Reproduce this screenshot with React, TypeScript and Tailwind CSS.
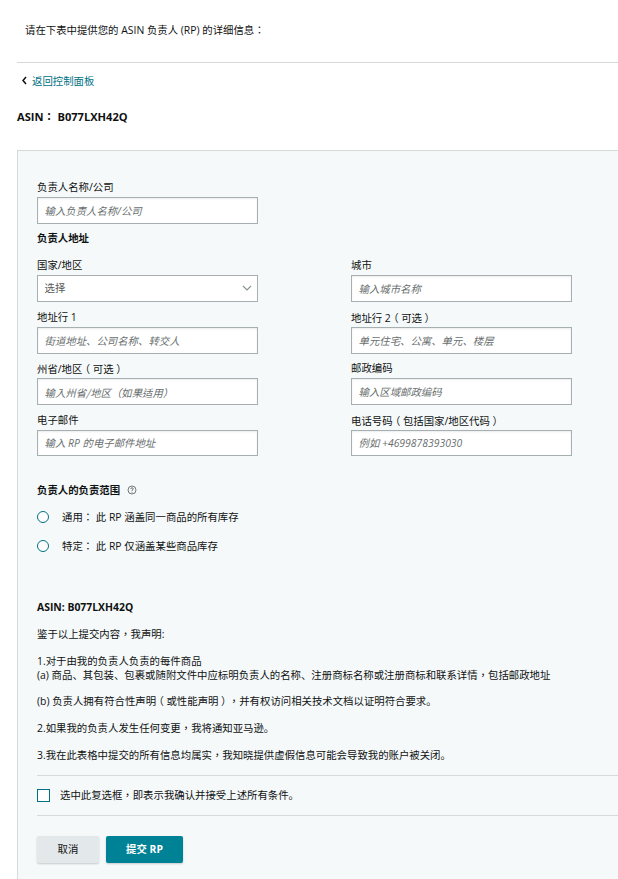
import React from "react";

const FONT = "font-['Open_Sans','Noto_Sans_CJK_SC',sans-serif]";
const TC = "font-['Noto_Sans_CJK_TC',sans-serif]";

function T({ children }: { children: string }) {
  return (
    <>
      {children.split(/([，：（）])/).map((part, i) => {
        if (part === "（" || part === "）") {
          return (
            <span key={i} className={`${TC} mx-[2.6px] [font-feature-settings:'halt']`}>
              {part}
            </span>
          );
        }
        if (part === "，" || part === "：") {
          return (
            <span key={i} className={TC}>
              {part}
            </span>
          );
        }
        return part;
      })}
    </>
  );
}

function Field({
  label,
  placeholder,
  tall = false,
  tc = false,
}: {
  label: string;
  placeholder: string;
  tall?: boolean;
  tc?: boolean;
}) {
  return (
    <div className="flex flex-col">
      <div className="mb-[3px] h-[13px] leading-[13px]">
        <T>{label}</T>
      </div>
      <input
        readOnly
        placeholder={placeholder}
        className={`${tall ? "h-[27.5px]" : "h-[26.67px]"} ${tc ? TC : ""} w-[221px] border border-[#a6b0b3] bg-white pl-[6.5px] pr-[7px] pt-px text-[10.4px] italic text-[#0f1111] outline-none placeholder:text-[#6a6f6f] placeholder:opacity-100 shadow-[inset_0_1px_2px_rgba(15,17,17,0.08)]`}
      />
    </div>
  );
}

function Radio({ text, className = "" }: { text: string; className?: string }) {
  return (
    <div className={`flex items-center ${className}`}>
      <span className="h-[12px] w-[12px] rounded-full border border-[#007185] bg-white" />
      <span className="ml-[13px]">
        <T>{text}</T>
      </span>
    </div>
  );
}

export default function App() {
  return (
    <div className={`${FONT} h-[879px] w-[618px] overflow-hidden bg-white text-[10.4px] leading-[14px] text-[#0f1111] [text-spacing-trim:space-all]`}>
      <div className="h-[62px] pl-[25px] pt-[23px]">
        <T>请在下表中提供您的 ASIN 负责人 (RP) 的详细信息：</T>
      </div>
      <div className="ml-[17px] h-px bg-[#d5d9d9]" />
      <div className="ml-[21px] mt-[11px] flex h-[14px] items-center">
        <svg width="7" height="9" viewBox="0 0 7 9" className="mb-[2px]">
          <path d="M5 1 L2 4.5 L5 8" fill="none" stroke="#0f1111" strokeWidth="1.5" />
        </svg>
        <span className="ml-[4px] text-[#007185]">返回控制面板</span>
      </div>
      <div className="ml-[17px] mt-[21px] h-[14px] text-[11.1px] font-bold">
        <T>ASIN：</T> B077LXH42Q
      </div>
      <div className="ml-[17px] mt-[27px] h-[740px] border-l border-t border-[#d5d9d9] bg-[#f5f9fa] pl-[19px] pt-[30px]">
        <Field label="负责人名称/公司" placeholder="输入负责人名称/公司" />
        <div className="mt-[7px] h-[14px] font-bold">负责人地址</div>
        <div className="mt-[14px] grid w-[535px] grid-cols-[221px_221px] gap-x-[93px] gap-y-[8.7px]">
          <div className="flex flex-col">
            <div className="mb-[3px] h-[13px] leading-[13px]">国家/地区</div>
            <div className="flex h-[27.5px] w-[221px] items-center justify-between border border-[#a6b0b3] bg-white pl-[6.5px] pr-[5px] text-[#565959]">
              <span>选择</span>
              <svg width="10" height="6" viewBox="0 0 10 6">
                <path d="M1 1 L5 5 L9 1" fill="none" stroke="#8a9496" strokeWidth="1.2" />
              </svg>
            </div>
          </div>
          <Field label="城市" placeholder="输入城市名称" tall />
          <Field label="地址行 1" placeholder="街道地址、公司名称、转交人" />
          <Field label="地址行 2（可选）" placeholder="单元住宅、公寓、单元、楼层" />
          <Field label="州省/地区（可选）" placeholder="输入州省/地区（如果适用）" tc />
          <Field label="邮政编码" placeholder="输入区域邮政编码" />
          <Field label="电子邮件" placeholder="输入 RP 的电子邮件地址" />
          <Field label="电话号码（包括国家/地区代码）" placeholder="例如 +4699878393030" />
        </div>
        <div className="mt-[27px] flex h-[14px] items-center font-bold">
          <span>负责人的负责范围</span>
          <svg width="10" height="10" viewBox="0 0 10 10" className="ml-[7px]">
            <circle cx="5" cy="5" r="4" fill="none" stroke="#565959" strokeWidth="0.8" />
            <path d="M3.7 4 Q3.8 2.8 5 2.8 Q6.3 2.8 6.3 3.9 Q6.3 4.6 5 5.2 V6" fill="none" stroke="#565959" strokeWidth="0.8" />
            <circle cx="5" cy="7.2" r="0.5" fill="#565959" />
          </svg>
        </div>
        <Radio text="通用： 此 RP 涵盖同一商品的所有库存" className="mt-[13px] h-[14px]" />
        <Radio text="特定： 此 RP 仅涵盖某些商品库存" className="mt-[14.5px] h-[14px]" />
        <div className="mt-[47.5px] h-[14px] font-bold">ASIN: B077LXH42Q</div>
        <div className="mt-[12.6px] h-[14px]">
          <T>鉴于以上提交内容，我声明:</T>
        </div>
        <div className="mt-[13.3px] h-[14px]">1.对于由我的负责人负责的每件商品</div>
        <div className="h-[14px]">
          <T>(a) 商品、其包装、包裹或随附文件中应标明负责人的名称、注册商标名称或注册商标和联系详情，包括邮政地址</T>
        </div>
        <div className="mt-[11.6px] h-[14px]">
          <T>(b) 负责人拥有符合性声明（或性能声明），并有权访问相关技术文档以证明符合要求。</T>
        </div>
        <div className="mt-[13.4px] h-[14px]">
          <T>2.如果我的负责人发生任何变更，我将通知亚马逊。</T>
        </div>
        <div className="mt-[13.3px] h-[14px]">
          <T>3.我在此表格中提交的所有信息均属实，我知晓提供虚假信息可能会导致我的账户被关闭。</T>
        </div>
        <div className="mt-[12.2px] h-px bg-[#d5d9d9]" />
        <div className="flex h-[39px] items-center">
          <span className="h-[13px] w-[13px] border border-[#007185] bg-white" />
          <span className="ml-[10px]">
            <T>选中此复选框，即表示我确认并接受上述所有条件。</T>
          </span>
        </div>
        <div className="h-px bg-[#d5d9d9]" />
        <div className="mt-[20px] flex gap-[7px]">
          <div className="flex h-[27px] w-[62px] items-center justify-center rounded-[2px] bg-[#e3e9ea] shadow-[0_1px_2px_rgba(15,17,17,0.2)]">取消</div>
          <div className="flex h-[27px] w-[77px] items-center justify-center rounded-[2px] bg-[#008296] font-bold text-white shadow-[0_1px_2px_rgba(15,17,17,0.2)]">提交 RP</div>
        </div>
      </div>
    </div>
  );
}
